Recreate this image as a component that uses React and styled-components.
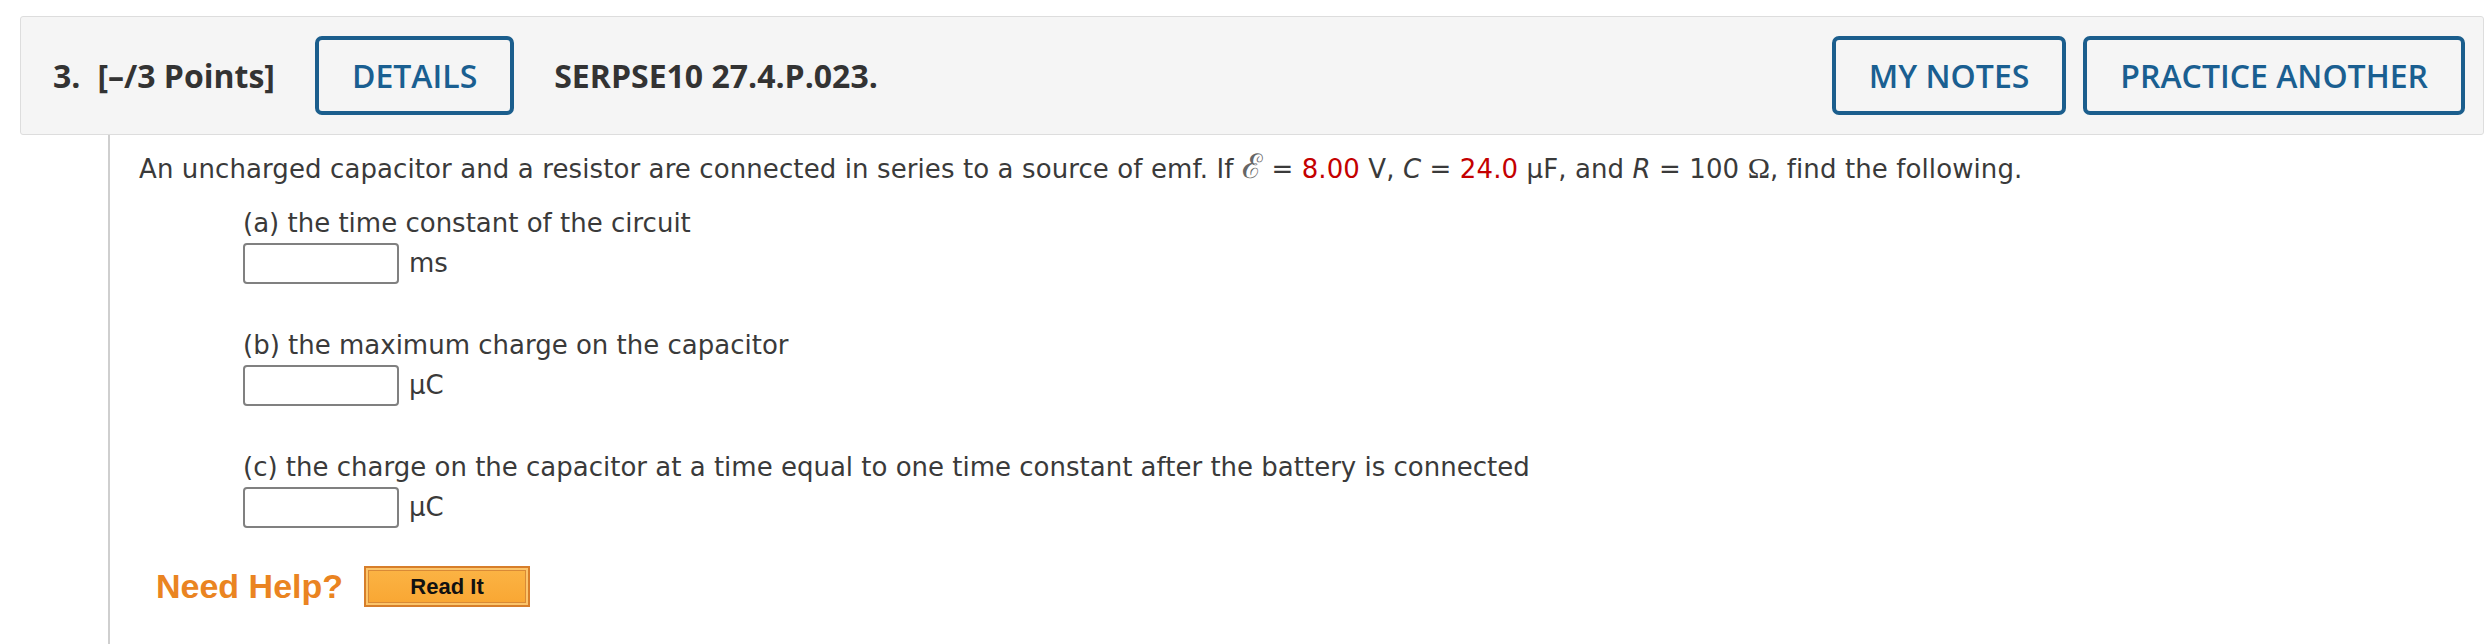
import React from 'react'
import styled, { createGlobalStyle } from 'styled-components'

const GlobalStyle = createGlobalStyle`
  body {
    margin: 16px 8px 0 20px;
    background: #fff;
  }
`

const Question = styled.div`
  width: 2464px;
`

const Header = styled.div`
  display: flex;
  align-items: center;
  height: 117px;
  padding: 0 18px 0 32px;
  background: #f5f5f5;
  border: 1px solid #dddddd;
  border-radius: 3px;
  font-family: 'Open Sans', sans-serif;
  color: #333;
`

const Title = styled.div`
  font-size: 32px;
  font-weight: 700;
  margin: 0 40px 0 ${(p) => p.$gap || 0}px;
  white-space: nowrap;
`

const Num = styled.span`
  margin-right: 17px;
`

const OutlineButton = styled.button`
  height: 79px;
  padding: 0 33px;
  background: transparent;
  border: 4px solid #1b5e8d;
  border-radius: 7px;
  color: #1a5f91;
  font-family: 'Open Sans', sans-serif;
  font-size: 32px;
  font-weight: 600;
  margin-left: ${(p) => p.$gap || 0}px;
`

const Spacer = styled.div`
  flex: 1;
`

const Panel = styled.div`
  margin-left: 88px;
  width: 2374px;
  height: 520px;
  border-left: 2px solid #cfcfcf;
  border-right: 2px solid #cfcfcf;
  padding: 12px 0 0 29px;
  font-family: 'DejaVu Sans', Verdana, sans-serif;
  font-size: 26px;
  line-height: 39px;
  color: #3a3a3a;
`

const Intro = styled.p`
  margin: 0 0 15px;
  white-space: nowrap;
  letter-spacing: 0.1px;
`

const Var = styled.i``

const Given = styled.span`
  color: #c40000;
`

const Emf = styled.span`
  font-family: 'DejaVu Serif', serif;
  font-size: 34px;
  color: #666;
`

const Ohm = styled.span`
  font-family: 'Liberation Serif', serif;
  font-size: 30px;
`

const Part = styled.div`
  margin: 0 0 42px 104px;
`

const Label = styled.div`
  white-space: nowrap;
`

const AnswerRow = styled.div`
  display: flex;
  align-items: center;
  gap: 10px;
`

const Field = styled.input`
  box-sizing: border-box;
  width: 156px;
  height: 41px;
  border: 2px solid #808080;
  border-radius: 4px;
  background: #fff;
`

const HelpRow = styled.div`
  display: flex;
  align-items: center;
  gap: 21px;
  margin: -4px 0 0 17px;
`

const NeedHelp = styled.span`
  font-family: 'Liberation Sans', Arial, sans-serif;
  font-size: 34px;
  font-weight: 700;
  color: #ea8421;
`

const ReadIt = styled.button`
  box-sizing: border-box;
  width: 166px;
  height: 41px;
  background: linear-gradient(#fbb445, #f9a632);
  border: 2px solid #d77e2a;
  box-shadow: inset 0 0 0 2px #fbc56c, inset 0 0 0 3px #d98a36;
  font-family: 'Liberation Sans', Arial, sans-serif;
  font-size: 22px;
  font-weight: 700;
  color: #111;
`

const parts = [
  { label: '(a) the time constant of the circuit', unit: 'ms' },
  { label: '(b) the maximum charge on the capacitor', unit: 'μC' },
  {
    label:
      '(c) the charge on the capacitor at a time equal to one time constant after the battery is connected',
    unit: 'μC',
  },
]

const App = () => (
  <>
    <GlobalStyle />
    <Question>
      <Header>
        <Title>
          <Num>3.</Num>[–/3 Points]
        </Title>
        <OutlineButton>DETAILS</OutlineButton>
        <Title $gap={40}>SERPSE10 27.4.P.023.</Title>
        <Spacer />
        <OutlineButton>MY NOTES</OutlineButton>
        <OutlineButton $gap={17}>PRACTICE ANOTHER</OutlineButton>
      </Header>
      <Panel>
        <Intro>
          An uncharged capacitor and a resistor are connected in series to a source of emf. If{' '}
          <Emf>ℰ</Emf> = <Given>8.00</Given> V, <Var>C</Var> = <Given>24.0</Given> μF, and{' '}
          <Var>R</Var> = 100 <Ohm>Ω</Ohm>, find the following.
        </Intro>
        {parts.map((p) => (
          <Part key={p.label}>
            <Label>{p.label}</Label>
            <AnswerRow>
              <Field type='text' />
              <span>{p.unit}</span>
            </AnswerRow>
          </Part>
        ))}
        <HelpRow>
          <NeedHelp>Need Help?</NeedHelp>
          <ReadIt>Read It</ReadIt>
        </HelpRow>
      </Panel>
    </Question>
  </>
)

export default App
